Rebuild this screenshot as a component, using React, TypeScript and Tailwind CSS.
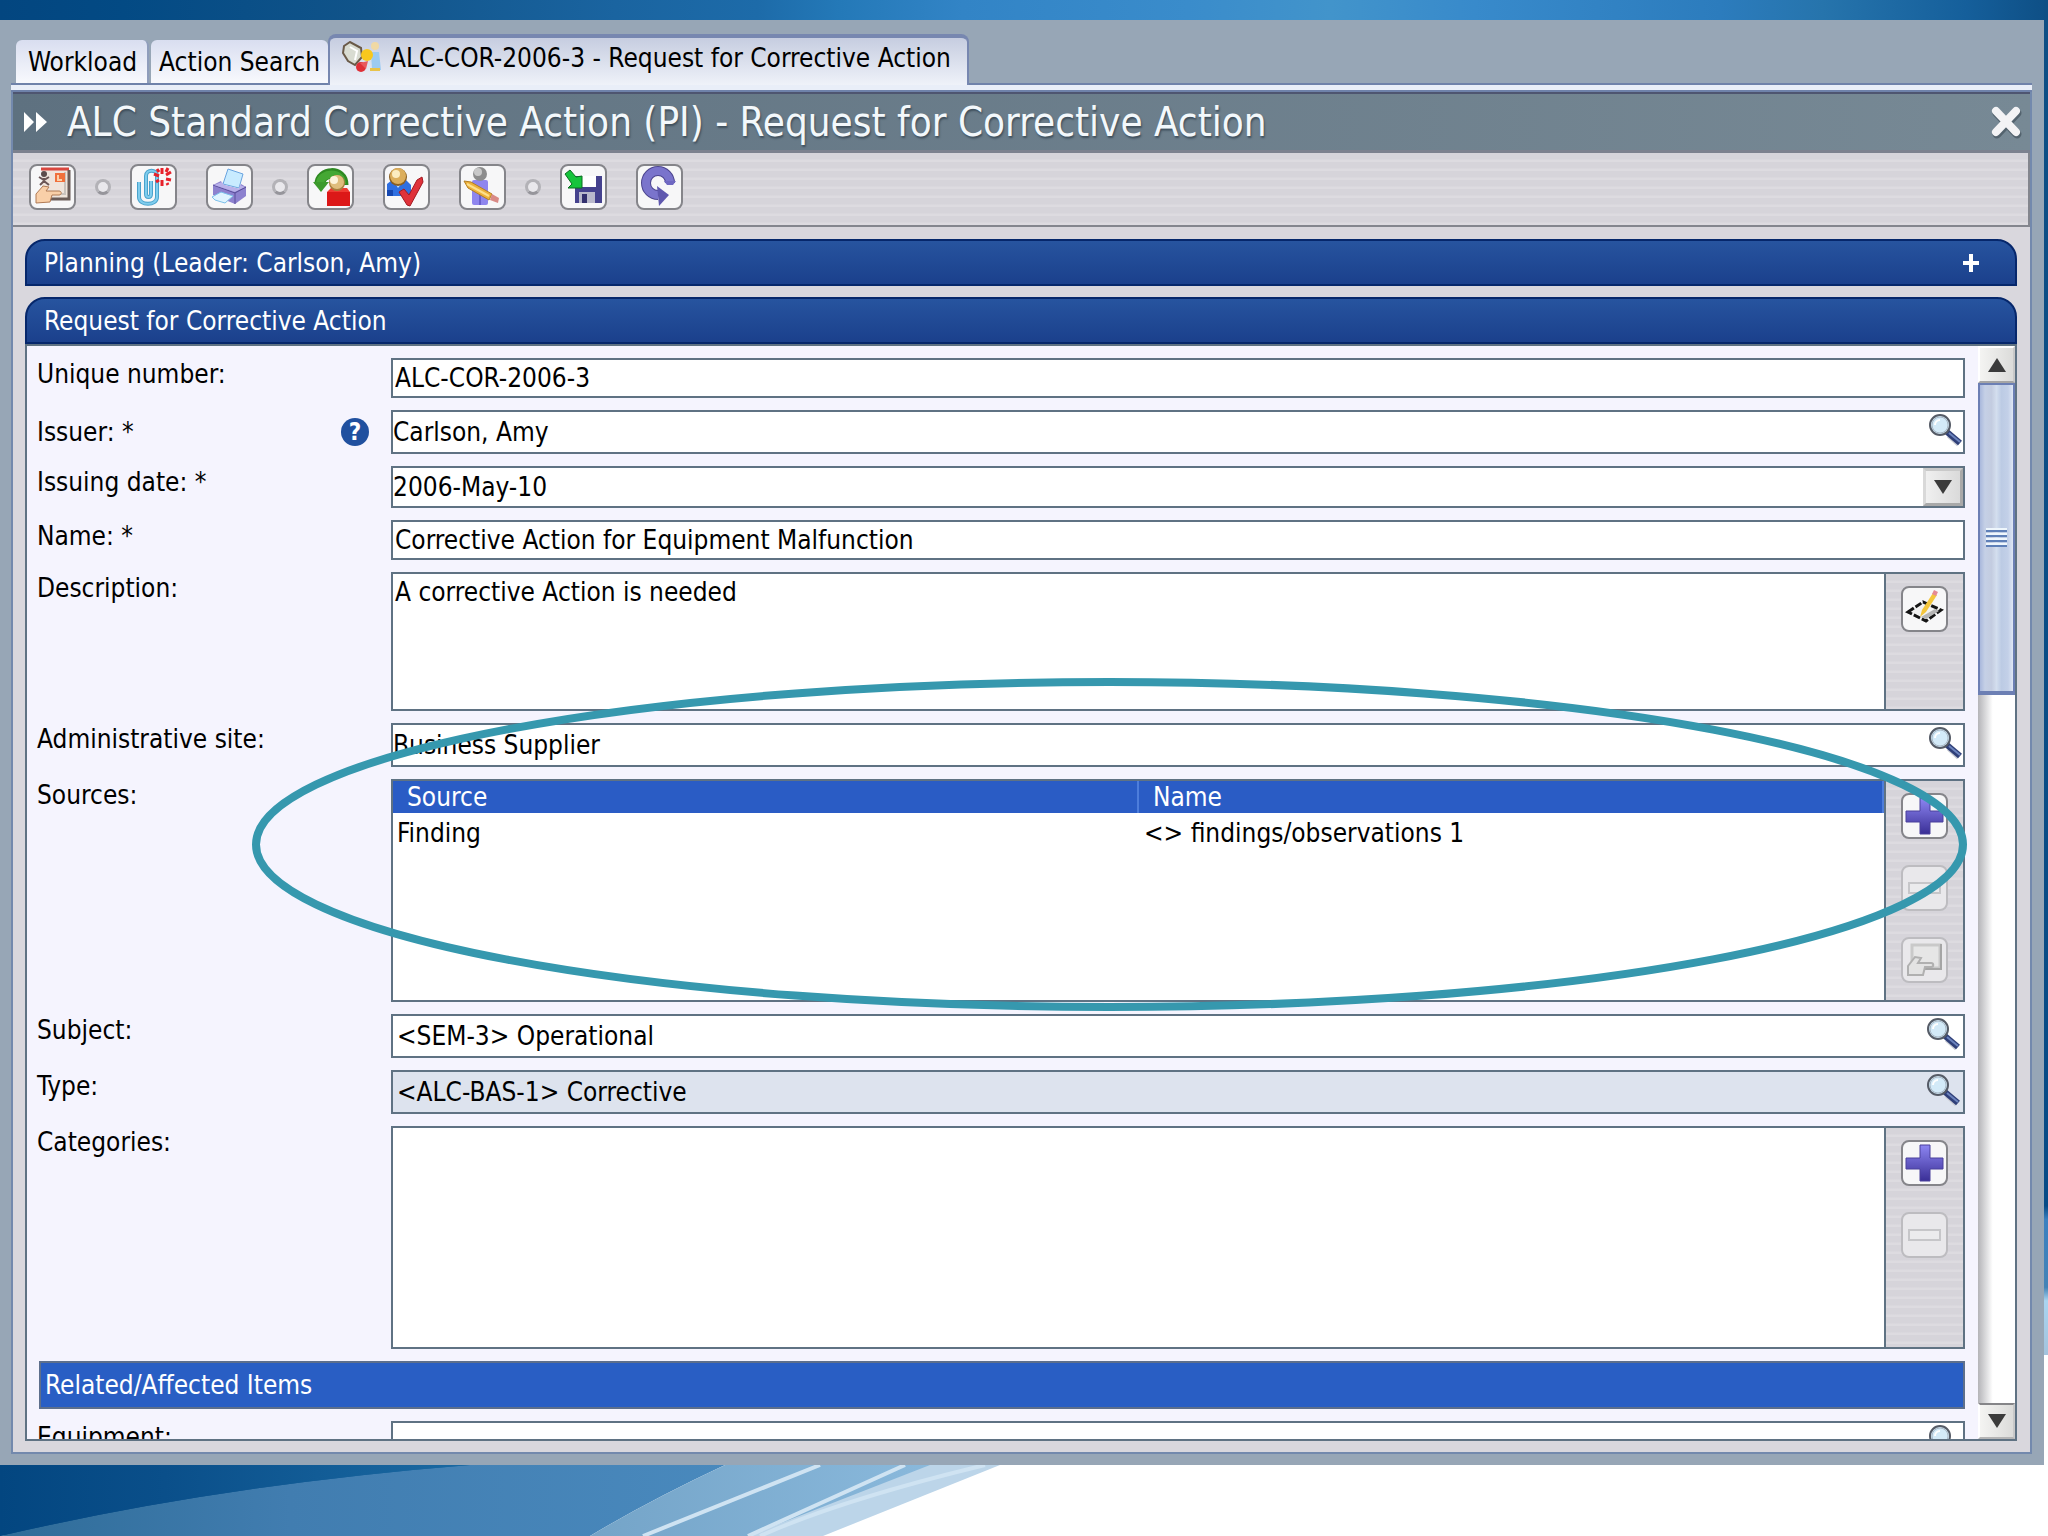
import React from 'react';

const TOOL_STRIPES = 'bg-[repeating-linear-gradient(180deg,#d6d4da_0px,#d6d4da_6px,#dddbe0_7px,#dddbe0_9px)]';

/* ---------- Icons ---------- */

// Every tool button icon shares the 47x46 box of the button
const ToolSvg: React.FC<{ children: React.ReactNode }> = ({ children }) => (
    <svg viewBox="2 2 43 42" className="h-full w-full" aria-hidden="true">
        {children}
    </svg>
);

const FormHandIcon = () => (
    <ToolSvg>
        <rect x="13" y="5" width="27" height="30" fill="#efe4dc" />
        <path d="M12 5h28" stroke="#d9473f" strokeWidth="3" />
        <path d="M40 6v29H20" fill="none" stroke="#6b5c58" strokeWidth="3" />
        <path d="M36 8v22H22" fill="none" stroke="#c9c2bd" strokeWidth="2" />
        <rect x="26" y="9" width="10" height="9" fill="#f0703c" />
        <path d="M29 11v5h4" fill="none" stroke="#fbd0a8" strokeWidth="2" />
        <circle cx="15" cy="10" r="3" fill="#5b4c4c" />
        <path d="M10 13l5 3 5-3M15 14v4M11 21l4-4 5 4" fill="none" stroke="#6a5555" strokeWidth="2" />
        <path d="M7 39V30l7-8 6 1-3 4h13c3 0 3 4 0 4h-7l-2 7z" fill="#f9cfa8" stroke="#b07a55" strokeWidth="1" />
    </ToolSvg>
);

const PaperclipIcon = () => (
    <ToolSvg>
        <path
            d="M9 18v15c0 9 18 9 18 0V12c0-7-11-7-11 0v18c0 4 5 4 5 0V17"
            fill="none" stroke="#4aa3cc" strokeWidth="4"
        />
        <path
            d="M9 18v15c0 9 18 9 18 0V12c0-7-11-7-11 0v18c0 4 5 4 5 0V17"
            fill="none" stroke="#7fcdee" strokeWidth="2"
        />
        <path d="M32 4v6M32 16v6M24 10l5 2M36 11l5-3M36 15l5 1M26 18l3-2M37 19l1 2M27 5l2 3M38 4l-2 4" stroke="#e8202a" strokeWidth="3" />
    </ToolSvg>
);

const PrinterIcon = () => (
    <ToolSvg>
        <path d="M22 5l15 5-4 14-16-4z" fill="#c8ebff" stroke="#6aa4e0" strokeWidth="1" />
        <path d="M7 21l8-4 2 4 16 4 2-5 5 3v9l-11 8-22-9z" fill="#8d82cf" />
        <path d="M7 21l22 8 11-6-11 5v12" fill="none" stroke="#5a4f9c" strokeWidth="1" />
        <path d="M8 21l8-3 2 3 15 4 1-4 5 2-10 5z" fill="#b9b1ea" />
        <path d="M6 33l9-5 12 4-8 7-10-3z" fill="#dff4ff" stroke="#7cc0ea" strokeWidth="1" />
    </ToolSvg>
);

const ReassignIcon = () => (
    <ToolSvg>
        <path d="M13 20C13 7 36 5 36 21" fill="none" stroke="#2f8a22" strokeWidth="11" />
        <path d="M13 19C14 8 35 7 35 20" fill="none" stroke="#45a834" strokeWidth="8" />
        <path d="M6 18h16l-8 10z" fill="#3c9a2c" />
        <rect x="20" y="28" width="23" height="14" fill="#dc1818" />
        <path d="M20 28l4-4h16l3 4z" fill="#ef3a32" />
        <circle cx="30" cy="19" r="8" fill="#a97c3c" />
        <circle cx="30" cy="18" r="7" fill="#dfbd7c" />
        <circle cx="27" cy="16" r="4" fill="#fdf3da" />
    </ToolSvg>
);

const UserCheckIcon = () => (
    <ToolSvg>
        <path d="M4 32V20l5-4h14l5 5v11z" fill="#2f6fe0" />
        <path d="M4 26h6v6H4z" fill="#1547b0" />
        <path d="M12 19l3 5 4-5z" fill="#bfe0ff" />
        <circle cx="15" cy="13" r="9" fill="#8a5f22" />
        <circle cx="15" cy="12" r="8" fill="#dcae5c" />
        <circle cx="13" cy="10" r="4" fill="#fcecc0" />
        <path d="M16 28l5-3 5 6 8-15 5-3 1 5-13 24-3-1z" fill="#e0323a" stroke="#a31a22" strokeWidth="1" />
    </ToolSvg>
);

const UserPencilIcon = () => (
    <ToolSvg>
        <rect x="13" y="16" width="16" height="25" rx="2" fill="#8f86ee" />
        <path d="M21 26v15" stroke="#6a60cc" strokeWidth="2" />
        <circle cx="21" cy="10" r="7" fill="#8d8d8d" />
        <circle cx="19" cy="8" r="4" fill="#c9c9c9" />
        <path d="M5 17l7 1 21 12-3 6-21-12z" fill="#eeb23c" stroke="#b37e22" strokeWidth="1" />
        <path d="M8 20l22 12" stroke="#fde08c" strokeWidth="2" />
        <path d="M33 30l7 4-1 5-8-3z" fill="#d98a86" />
    </ToolSvg>
);

const SaveIcon = () => (
    <ToolSvg>
        <path d="M15 12h27v27H15z" fill="#45428e" />
        <rect x="21" y="12" width="15" height="11" fill="#ffffff" />
        <rect x="19" y="28" width="16" height="11" fill="#b9b9cc" />
        <rect x="22" y="30" width="5" height="9" fill="#33306e" />
        <path d="M5 10l5-4 6 7 6-1v12H8l4-4z" fill="#16c43c" stroke="#0b6e20" strokeWidth="1" />
    </ToolSvg>
);

const RefreshIcon = () => (
    <ToolSvg>
        <path d="M34 19a12 12 0 1 0-12 12" fill="none" stroke="#4c458f" strokeWidth="10" />
        <path d="M34 19a12 12 0 1 0-12 12" fill="none" stroke="#7a74cc" strokeWidth="8" />
        <path d="M28 17h12l-3 4h-6z" fill="#6f68c2" />
        <path d="M21 22l12 9-10 11z" fill="#5f58ae" />
    </ToolSvg>
);

const EditNoteIcon = () => (
    <ToolSvg>
        <path d="M7 26l15-10 18 8-15 11z" fill="#f2f2f2" stroke="#151515" strokeWidth="3" strokeDasharray="7 2" />
        <path d="M20 31l14-8 4 2-13 8z" fill="#b5b5b5" />
        <path d="M19 31l2-7 11-17 4 2-11 17z" fill="#f4c63c" />
        <path d="M31 8l2-4 4 2-2 4z" fill="#e58a94" />
    </ToolSvg>
);

const PlusIcon = () => (
    <ToolSvg>
        <defs>
            <linearGradient id="plusFill" x1="0" y1="0" x2="0" y2="1">
                <stop offset="0" stopColor="#8d86f2" />
                <stop offset="1" stopColor="#3a2f96" />
            </linearGradient>
        </defs>
        <path d="M19 5h10v13h13v11H29v12H19V29H5V18h14z" fill="url(#plusFill)" stroke="#4a419c" strokeWidth="1" />
    </ToolSvg>
);

const MinusIcon = () => (
    <ToolSvg>
        <rect x="8" y="18" width="31" height="10" fill="#ebebed" stroke="#c6c6c9" strokeWidth="2" />
    </ToolSvg>
);

const OpenFormIcon = () => (
    <ToolSvg>
        <rect x="11" y="8" width="28" height="23" fill="#e6e6e6" stroke="#c9c9c9" strokeWidth="3" />
        <path d="M40 7v25H22" fill="none" stroke="#a5a5a5" strokeWidth="2" />
        <path d="M7 38v-9l7-9 6 1-3 5h13c3 0 3 4 0 4h-6l-2 8z" fill="#e3e3e3" stroke="#b0b0b0" strokeWidth="2" />
    </ToolSvg>
);

const SearchIcon = () => (
    <svg viewBox="0 0 34 34" className="h-[34px] w-[34px]" aria-hidden="true">
        <path d="M20 21l10 9" stroke="#c9ccd4" strokeWidth="6" />
        <path d="M18 18l13 11" stroke="#2f3f78" strokeWidth="6" />
        <path d="M20 19l11 9" stroke="#6b83bd" strokeWidth="2" />
        <circle cx="11" cy="11" r="10" fill="#d3eaf8" stroke="#555b66" strokeWidth="2" />
        <circle cx="11" cy="11" r="8" fill="none" stroke="#a9b8c6" strokeWidth="1" />
        <path d="M6 11a5 5 0 0 1 5-5" fill="none" stroke="#ffffff" strokeWidth="2" />
    </svg>
);

const TabIcon = () => (
    <svg viewBox="0 0 40 34" className="h-[34px] w-10" aria-hidden="true">
        <path d="M2 5l6-4 11 6 1 9-7 8-7-4-5-8z" fill="#d9dcd2" stroke="#6a5a48" strokeWidth="2" />
        <path d="M8 6l7 4-2 9" fill="none" stroke="#ffffff" strokeWidth="2" />
        <circle cx="33" cy="5" r="4" fill="#f0d9a4" />
        <path d="M29 11h8l2 18h-9z" fill="#9ccbf2" />
        <path d="M28 27h10v3H28z" fill="#e8c34a" />
        <circle cx="25" cy="14" r="6" fill="#f8c81e" />
        <circle cx="19" cy="26" r="5" fill="#df2f36" />
        <path d="M18 22l8-2-2 8z" fill="#e8585c" />
    </svg>
);

const Triangle: React.FC<{ down?: boolean }> = ({ down }) => (
    <svg viewBox="0 0 18 14" className="h-3.5 w-[18px]" aria-hidden="true">
        <path d={down ? 'M0 0h18l-9 14z' : 'M9 0l9 14H0z'} fill="#3b3b3b" />
    </svg>
);

/* ---------- Controls ---------- */

const ToolButton: React.FC<{ label: string; disabled?: boolean; children: React.ReactNode }> = ({ label, disabled, children }) => (
    <button
        type="button"
        aria-label={label}
        disabled={disabled}
        className={`h-[46px] w-[47px] shrink-0 rounded-lg border-2 ${
            disabled ? 'border-[#bdbcc0] bg-[#e9e8eb]' : 'border-[#85858a] bg-[#f7f7f8]'
        }`}
    >
        {children}
    </button>
);

const Dot = () => (
    <div className="flex h-[46px] w-[54px] items-center justify-center">
        <span className="h-4 w-4 rounded-full border-3 border-t-[#b3b2b7] border-r-[#b3b2b7] border-b-[#96959b] border-l-[#b3b2b7] bg-[#e9e8ec]" />
    </div>
);

const Row: React.FC<{ id: string; label: string; help?: boolean; children: React.ReactNode }> = ({ id, label, help, children }) => (
    <div className={`flex ${help ? 'items-center' : 'items-start'}`}>
        <div className="flex w-[354px] shrink-0 items-center justify-between pr-[22px]">
            <label htmlFor={id} className="leading-8">{label}</label>
            {help && (
                <button type="button" aria-label="Help" className="h-7 w-7 rounded-full bg-[#20509f] text-2xl leading-7 font-bold text-white">
                    ?
                </button>
            )}
        </div>
        {children}
    </div>
);

const FIELD = 'flex min-w-0 flex-1 border-2 border-[#5f7283]';

const TextField: React.FC<{ id: string; value: string }> = ({ id, value }) => (
    <input id={id} type="text" defaultValue={value} className="h-10 min-w-0 flex-1 border-2 border-[#5f7283] bg-white px-0.5" />
);

const LookupField: React.FC<{ id: string; value: string; filled?: boolean; inset?: boolean }> = ({ id, value, filled, inset }) => (
    <div className={`${FIELD} h-11 ${filled ? 'bg-[#dde3ee]' : 'bg-white'}`}>
        <input id={id} type="text" defaultValue={value} className={`min-w-0 flex-1 bg-transparent ${inset ? 'px-1' : ''}`} />
        <button type="button" aria-label="Search" className={`flex shrink-0 items-start pt-0.5 ${inset ? 'pr-0.5' : ''}`}>
            <SearchIcon />
        </button>
    </div>
);

const SideTools: React.FC<{ children: React.ReactNode }> = ({ children }) => (
    <div className={`flex w-[79px] shrink-0 flex-col items-center gap-[26px] border-l-2 border-[#5f7283] pt-3 ${TOOL_STRIPES}`}>
        {children}
    </div>
);

const SectionHeader: React.FC<{ title: string; children?: React.ReactNode }> = ({ title, children }) => (
    <header className="flex h-[47px] shrink-0 items-center justify-between rounded-t-[20px] border-2 border-[#06276b] bg-linear-to-b from-[#27549f] to-[#1b408c] pr-9 pl-[17px] text-white">
        <h2>{title}</h2>
        {children}
    </header>
);

const ScrollBar = () => (
    <div className="flex w-[37px] shrink-0 flex-col bg-linear-to-r from-[#b4b4b8] to-white to-40%">
        <button type="button" aria-label="Scroll up" className="flex h-[37px] items-center justify-center border-2 border-t-white border-r-[#c9c9c9] border-b-[#a5a5a5] border-l-white bg-linear-to-r from-[#f4f4f2] to-[#dcdcda]">
            <Triangle />
        </button>
        <div className="flex h-[312px] flex-col items-center justify-center gap-[3px] border-2 border-b-4 border-[#6c7fb4] bg-[linear-gradient(90deg,#a9b8dc_0%,#c5d0e6_15%,#c3cce0_35%,#d3deee_50%,#bccbe4_65%,#c3d0e8_85%,#dfe7f5_100%)]">
            <span className="h-0.5 w-[21px] bg-[#5f80b8] shadow-[0_-2px_0_#eef6fc]" />
            <span className="h-0.5 w-[21px] bg-[#5f80b8] shadow-[0_-2px_0_#eef6fc]" />
            <span className="h-0.5 w-[21px] bg-[#5f80b8] shadow-[0_-2px_0_#eef6fc]" />
            <span className="h-0.5 w-[21px] bg-[#5f80b8] shadow-[0_-2px_0_#eef6fc]" />
        </div>
        <div className="flex-1" />
        <button type="button" aria-label="Scroll down" className="flex h-9 items-center justify-center border-2 border-t-[#858588] border-r-[#c9c9c9] border-b-[#b5b5b5] border-l-white bg-linear-to-r from-[#f4f4f2] to-[#dcdcda]">
            <Triangle down />
        </button>
    </div>
);

// Decorative slide background seen around the application window
const Backdrop = () => (
    <div className="absolute inset-0 bg-white" aria-hidden="true">
        <div className="h-5 bg-[linear-gradient(90deg,#034680_0%,#034a84_6%,#11548a_18%,#1a64a0_30%,#1d6ba9_37%,#2479b8_41%,#3284c6_47%,#3a8ccb_58%,#4294cb_65%,#388acb_72%,#2c7cbd_84%,#2674ac_89%,#155f9b_96%,#0e4f85_100%)]" />
        <div className="absolute top-0 right-0 h-[1355px] w-1 bg-[linear-gradient(180deg,#0e4f85_0%,#074b86_89%,#3b80c0_90%,#4383b6_95%,#a9d4f0_96%,#a3c3dd_100%)]" />
        <svg viewBox="0 0 2048 71" preserveAspectRatio="none" className="absolute bottom-0 left-0 h-[71px] w-full">
            <defs>
                <linearGradient id="deepBlue" x1="0" y1="0" x2="1" y2="0">
                    <stop offset="0" stopColor="#034680" />
                    <stop offset="0.35" stopColor="#0a4f8a" />
                    <stop offset="1" stopColor="#1a69a2" />
                </linearGradient>
                <linearGradient id="midBlue" x1="0" y1="0" x2="1" y2="0">
                    <stop offset="0" stopColor="#2f6c98" />
                    <stop offset="0.4" stopColor="#417db0" />
                    <stop offset="1" stopColor="#4989bd" />
                </linearGradient>
                <linearGradient id="paleBlue" x1="0" y1="0" x2="1" y2="0">
                    <stop offset="0" stopColor="#74a4c8" />
                    <stop offset="1" stopColor="#8ab9dc" />
                </linearGradient>
            </defs>
            <path d="M0 0H480L0 71z" fill="url(#deepBlue)" />
            <path d="M0 71Q220 20 470 0H725Q650 35 590 71z" fill="url(#midBlue)" />
            <path d="M0 0h470Q220 20 0 71z" fill="url(#deepBlue)" />
            <path d="M725 0H935L760 71H590Q650 35 725 0z" fill="url(#paleBlue)" />
            <path d="M930 0h70L823 71h-75z" fill="#bcd5e9" />
            <path d="M820 0L643 71M905 0L748 71M985 0Q840 35 760 71" fill="none" stroke="#cfe3f2" strokeWidth="4" />
        </svg>
    </div>
);

const sources = [{ source: 'Finding', name: '<> findings/observations 1' }];

export default function App() {
    return (
        <div className="relative flex h-screen flex-col overflow-hidden pt-5 pr-1 pb-[71px] font-['DejaVu_Sans_Condensed','DejaVu_Sans',sans-serif] text-[26px] leading-8 text-black">
            <Backdrop />

            <main className="relative flex min-h-0 flex-1 flex-col bg-[#97a6b6] pr-3 pb-[11px] pl-[11px]">
                {/* Tabs */}
                <nav role="tablist" className="flex h-[63px] shrink-0 items-end pl-[5px]">
                    <button type="button" role="tab" className="mr-0.5 h-[43px] rounded-t-md border-r-2 border-[#8f9dbb] bg-linear-to-b from-[#d9def0] to-[#f8f9fd] pr-2.5 pl-3">
                        Workload
                    </button>
                    <button type="button" role="tab" className="h-[43px] rounded-t-md bg-linear-to-b from-[#d9def0] to-[#f8f9fd] px-2">
                        Action Search
                    </button>
                    <button
                        type="button"
                        role="tab"
                        aria-selected="true"
                        className="relative z-10 -mb-0.5 flex h-[51px] items-center gap-2 rounded-t-lg border-x-2 border-t-4 border-[#7787b0] bg-linear-to-b from-[#c6cde0] to-[#eff2f9] pr-4 pb-2 pl-3"
                    >
                        <TabIcon />
                        <span>ALC-COR-2006-3 - Request for Corrective Action</span>
                    </button>
                </nav>
                <div className="h-[9px] shrink-0 border-y-2 border-[#6f82aa] bg-[#e9eef8]" />

                <section className="flex min-h-0 flex-1 flex-col border-x-2 border-b-2 border-[#7389ad] bg-[#d9d7dd]">
                    {/* Title bar */}
                    <div className="flex h-[61px] shrink-0 items-center border-t-2 border-b-3 border-t-[#4e5570] border-b-[#7c818e] bg-linear-to-r from-[#5e7180] to-[#778995] pr-1.5 pl-[11px]">
                        <svg viewBox="0 0 23 20" className="h-5 w-[23px]" aria-hidden="true">
                            <path d="M0 0l10 10L0 20zM12 0l11 10-11 10z" fill="#ffffff" />
                        </svg>
                        <h1 className="flex-1 pl-5 text-[40px] leading-[52px] text-[#f3f8fb] [text-shadow:1px_2px_2px_#3f4f5c]">
                            ALC Standard Corrective Action (PI) - Request for Corrective Action
                        </h1>
                        <button type="button" aria-label="Close">
                            <svg viewBox="0 0 36 36" className="h-9 w-9" aria-hidden="true">
                                <path d="M9 9l20 21M29 9L9 30" stroke="#3c4a55" strokeWidth="9" strokeLinecap="round" opacity="0.6" />
                                <path d="M8 7l20 21M28 7L8 28" stroke="#f3f3f5" strokeWidth="8" strokeLinecap="round" />
                            </svg>
                        </button>
                    </div>

                    {/* Toolbar */}
                    <div role="toolbar" className={`flex h-[74px] shrink-0 items-start border-r-2 border-b-2 border-[#84868e] pt-[11px] pl-4 ${TOOL_STRIPES}`}>
                        <ToolButton label="Open form"><FormHandIcon /></ToolButton>
                        <Dot />
                        <div className="flex gap-[29px]">
                            <ToolButton label="Attach"><PaperclipIcon /></ToolButton>
                            <ToolButton label="Print"><PrinterIcon /></ToolButton>
                        </div>
                        <Dot />
                        <div className="flex gap-[29px]">
                            <ToolButton label="Reassign"><ReassignIcon /></ToolButton>
                            <ToolButton label="Approve"><UserCheckIcon /></ToolButton>
                            <ToolButton label="Edit user"><UserPencilIcon /></ToolButton>
                        </div>
                        <Dot />
                        <div className="flex gap-[29px]">
                            <ToolButton label="Save"><SaveIcon /></ToolButton>
                            <ToolButton label="Refresh"><RefreshIcon /></ToolButton>
                        </div>
                    </div>

                    <div className="flex min-h-0 flex-1 flex-col gap-[11px] pt-3 pr-[13px] pb-[11px] pl-3">
                        <SectionHeader title="Planning (Leader: Carlson, Amy)">
                            <button type="button" aria-label="Expand">
                                <svg viewBox="0 0 16 18" className="h-[18px] w-4" aria-hidden="true">
                                    <path d="M8 0v18M0 9h16" stroke="#ffffff" strokeWidth="4" />
                                </svg>
                            </button>
                        </SectionHeader>

                        <div className="flex min-h-0 flex-1 flex-col">
                            <SectionHeader title="Request for Corrective Action" />
                            <div className="flex min-h-0 flex-1 overflow-hidden border-2 border-[#5f7283] bg-[#f5f4fe]">
                                <form className="relative flex min-w-0 flex-1 flex-col gap-3 overflow-hidden pt-3 pr-[13px] pl-[10px]">
                                    <Row id="number" label="Unique number:">
                                        <TextField id="number" value="ALC-COR-2006-3" />
                                    </Row>
                                    <Row id="issuer" label="Issuer: *" help>
                                        <LookupField id="issuer" value="Carlson, Amy" />
                                    </Row>
                                    <Row id="date" label="Issuing date: *">
                                        <div className={`${FIELD} h-[42px] bg-white`}>
                                            <input id="date" type="text" defaultValue="2006-May-10" className="min-w-0 flex-1" />
                                            <button type="button" aria-label="Pick date" className="flex w-10 items-center justify-center border-3 border-t-[#c9c9c9] border-r-[#a9a9a9] border-b-[#a9a9a9] border-l-[#d9d9d9] bg-linear-to-r from-[#f0f0f0] to-[#dadada]">
                                                <Triangle down />
                                            </button>
                                        </div>
                                    </Row>
                                    <Row id="name" label="Name: *">
                                        <TextField id="name" value="Corrective Action for Equipment Malfunction" />
                                    </Row>
                                    <Row id="description" label="Description:">
                                        <div className={`${FIELD} h-[139px] bg-white`}>
                                            <textarea id="description" defaultValue="A corrective Action is needed" className="min-w-0 flex-1 resize-none px-0.5 py-0.5" />
                                            <SideTools>
                                                <ToolButton label="Edit description"><EditNoteIcon /></ToolButton>
                                            </SideTools>
                                        </div>
                                    </Row>
                                    <Row id="site" label="Administrative site:">
                                        <LookupField id="site" value="Business Supplier" />
                                    </Row>
                                    <Row id="sources" label="Sources:">
                                        <div className={`${FIELD} h-[223px] bg-white`}>
                                            <div className="min-w-0 flex-1">
                                                <table id="sources" className="w-full table-fixed text-left">
                                                    <thead className="bg-[#2a5cc5] text-white">
                                                        <tr>
                                                            <th className="border-r-2 border-[#4d7ddb] py-0 pl-3.5 font-normal">Source</th>
                                                            <th className="border-r-2 border-[#4d7ddb] py-0 pl-3.5 font-normal">Name</th>
                                                        </tr>
                                                    </thead>
                                                    <tbody>
                                                        {sources.map((row) => (
                                                            <tr key={row.name}>
                                                                <td className="py-1 pl-1">{row.source}</td>
                                                                <td className="py-1 pl-1.5">{row.name}</td>
                                                            </tr>
                                                        ))}
                                                    </tbody>
                                                </table>
                                            </div>
                                            <SideTools>
                                                <ToolButton label="Add source"><PlusIcon /></ToolButton>
                                                <ToolButton label="Remove source" disabled><MinusIcon /></ToolButton>
                                                <ToolButton label="Open source" disabled><OpenFormIcon /></ToolButton>
                                            </SideTools>
                                        </div>
                                    </Row>
                                    <Row id="subject" label="Subject:">
                                        <LookupField id="subject" value="<SEM-3> Operational" inset />
                                    </Row>
                                    <Row id="type" label="Type:">
                                        <LookupField id="type" value="<ALC-BAS-1> Corrective" inset filled />
                                    </Row>
                                    <Row id="categories" label="Categories:">
                                        <div className={`${FIELD} h-[223px] bg-white`}>
                                            <textarea id="categories" className="min-w-0 flex-1 resize-none" />
                                            <SideTools>
                                                <ToolButton label="Add category"><PlusIcon /></ToolButton>
                                                <ToolButton label="Remove category" disabled><MinusIcon /></ToolButton>
                                            </SideTools>
                                        </div>
                                    </Row>
                                    <h3 className="ml-0.5 flex h-12 shrink-0 items-center border-2 border-[#5d6f8c] bg-[#295ec4] pl-1 text-white">
                                        Related/Affected Items
                                    </h3>
                                    <Row id="equipment" label="Equipment:">
                                        <LookupField id="equipment" value="" />
                                    </Row>

                                    {/* Highlight ring around the sources block */}
                                    <svg className="pointer-events-none absolute top-[336px] right-[15px] left-[229px] h-[325px] w-[calc(100%-244px)] overflow-visible" aria-hidden="true">
                                        <ellipse cx="50%" cy="50%" rx="50%" ry="50%" fill="none" stroke="#3698ae" strokeWidth="8" />
                                    </svg>
                                </form>
                                <ScrollBar />
                            </div>
                        </div>
                    </div>
                </section>
            </main>
        </div>
    );
}
